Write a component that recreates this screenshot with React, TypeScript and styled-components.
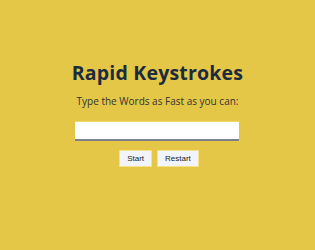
import styled, { createGlobalStyle } from "styled-components";

const GlobalStyle = createGlobalStyle`
	html, body {
		margin: 0;
		padding: 0;
		background: #e5c747;
	}
`;

const Page = styled.div`
	width: 315px;
	height: 250px;
	display: flex;
	flex-direction: column;
	align-items: center;
	padding-top: 59px;
	box-sizing: border-box;
	background: #e5c747;
	font-family: "Open Sans", sans-serif;
`;

const Title = styled.h1`
	margin: 0;
	font-size: 19.5px;
	font-weight: 700;
	color: #1c2b3e;
	letter-spacing: 0.2px;
`;

const Subtitle = styled.p`
	margin: 8px 0 0 0;
	font-size: 10px;
	color: #333333;
`;

const WordInput = styled.input`
	margin-top: 13px;
	margin-left: -2px;
	width: 164px;
	height: 20px;
	box-sizing: border-box;
	background: #ffffff;
	border: none;
	border-top: 1px solid #f3d865;
	border-bottom: 2px solid #7d7f8c;
	outline: none;
`;

const Buttons = styled.div`
	display: flex;
	gap: 5px;
	margin-top: 9px;
	margin-left: 3px;
`;

const Button = styled.button`
	height: 17px;
	padding: 0 7px;
	border: 1px solid #f6e08a;
	background: #f1f5fb;
	font-family: "Liberation Sans", Arial, sans-serif;
	font-size: 8px;
	color: #222;
`;

export default function App(): JSX.Element {
	return (
		<>
			<GlobalStyle />
			<Page>
				<Title>Rapid Keystrokes</Title>
				<Subtitle>Type the Words as Fast as you can:</Subtitle>
				<WordInput />
				<Buttons>
					<Button>Start</Button>
					<Button>Restart</Button>
				</Buttons>
			</Page>
		</>
	);
}
